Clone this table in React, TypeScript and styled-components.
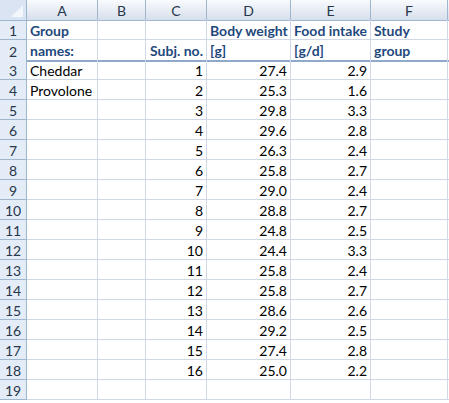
import React from "react";
import styled, { createGlobalStyle, css } from "styled-components";

const Global = createGlobalStyle`
  html, body { margin: 0; padding: 0; background: #ffffff; }
  body { font-family: Lato, "Liberation Sans", sans-serif; }
`;

const COLS = "27px 71px 48px 61px 84px 80px 77px 1fr";

const Sheet = styled.div`
  width: 449px;
  height: 403px;
  overflow: hidden;
  display: grid;
  grid-template-columns: ${COLS};
  grid-auto-rows: 20px;
  background: #ffffff;
`;

const Corner = styled.div`
  position: relative;
  height: 21px;
  box-sizing: border-box;
  background: #dae4f2;
  border-right: 1px solid #9eb6ce;
  border-bottom: 1px solid #9eb6ce;
  &::after {
    content: "";
    position: absolute;
    right: 3px;
    bottom: 3px;
    width: 0;
    height: 0;
    border-left: 12px solid transparent;
    border-bottom: 12px solid #f3f6fb;
  }
`;

const ColHead = styled.div`
  height: 21px;
  box-sizing: border-box;
  display: flex;
  align-items: center;
  justify-content: center;
  background: linear-gradient(#f9fbfd, #e4eaf3 60%, #d6dfeb);
  border-right: 1px solid #9eb6ce;
  border-bottom: 1px solid #9eb6ce;
  color: #27364a;
  font-size: 14px;
  font-family: Lato, "Liberation Sans", sans-serif;
`;

const RowHead = styled.div<{ $thick?: boolean }>`
  box-sizing: border-box;
  display: flex;
  align-items: center;
  justify-content: center;
  background: #e4ecf7;
  border-right: 1px solid #9eb6ce;
  border-bottom: 1px solid #9eb6ce;
  color: #27364a;
  font-size: 14px;
  padding-top: 1px;
  ${(p) => p.$thick && css`height: 22px;`}
`;

const Cell = styled.div<{ $num?: boolean; $bold?: boolean; $thick?: boolean }>`
  box-sizing: border-box;
  display: flex;
  align-items: center;
  justify-content: ${(p) => (p.$num ? "flex-end" : "flex-start")};
  padding: 1px 3px 0 3px;
  border-right: 1px solid #d0d7e5;
  border-bottom: 1px solid #d0d7e5;
  font-size: 14px;
  white-space: nowrap;
  overflow: visible;
  color: ${(p) => (p.$bold ? "#1f497d" : "#000000")};
  font-weight: ${(p) => (p.$bold ? 700 : 400)};
  ${(p) =>
    p.$thick &&
    css`
      height: 22px;
      border-bottom: 2px solid #8ea9c9;
    `}
`;

type C = { t?: string; num?: boolean; bold?: boolean };

const data: [number, number, number][] = [
  [1, 27.4, 2.9],
  [2, 25.3, 1.6],
  [3, 29.8, 3.3],
  [4, 29.6, 2.8],
  [5, 26.3, 2.4],
  [6, 25.8, 2.7],
  [7, 29.0, 2.4],
  [8, 28.8, 2.7],
  [9, 24.8, 2.5],
  [10, 24.4, 3.3],
  [11, 25.8, 2.4],
  [12, 25.8, 2.7],
  [13, 28.6, 2.6],
  [14, 29.2, 2.5],
  [15, 27.4, 2.8],
  [16, 25.0, 2.2],
];

const names = ["Cheddar", "Provolone"];

const rows: C[][] = [
  [
    { t: "Group", bold: true },
    {},
    {},
    { t: "Body weight", bold: true },
    { t: "Food intake", bold: true },
    { t: "Study", bold: true },
    {},
  ],
  [
    { t: "names:", bold: true },
    {},
    { t: "Subj. no.", bold: true, num: true },
    { t: "[g]", bold: true },
    { t: "[g/d]", bold: true },
    { t: "group", bold: true },
    {},
  ],
  ...data.map(([n, w, f], i) => [
    { t: names[i] },
    {},
    { t: String(n), num: true },
    { t: w.toFixed(1), num: true },
    { t: f.toFixed(1), num: true },
    {},
    {},
  ]),
  [{}, {}, {}, {}, {}, {}, {}],
];

export default function App() {
  return (
    <>
      <Global />
      <Sheet>
        <Corner />
        {["A", "B", "C", "D", "E", "F", ""].map((l, i) => (
          <ColHead key={i}>{l}</ColHead>
        ))}
        {rows.map((r, ri) => (
          <React.Fragment key={ri}>
            <RowHead $thick={ri === 1}>{ri + 1}</RowHead>
            {r.map((c, ci) => (
              <Cell key={ci} $num={c.num} $bold={c.bold} $thick={ri === 1}>
                {c.t}
              </Cell>
            ))}
          </React.Fragment>
        ))}
      </Sheet>
    </>
  );
}
